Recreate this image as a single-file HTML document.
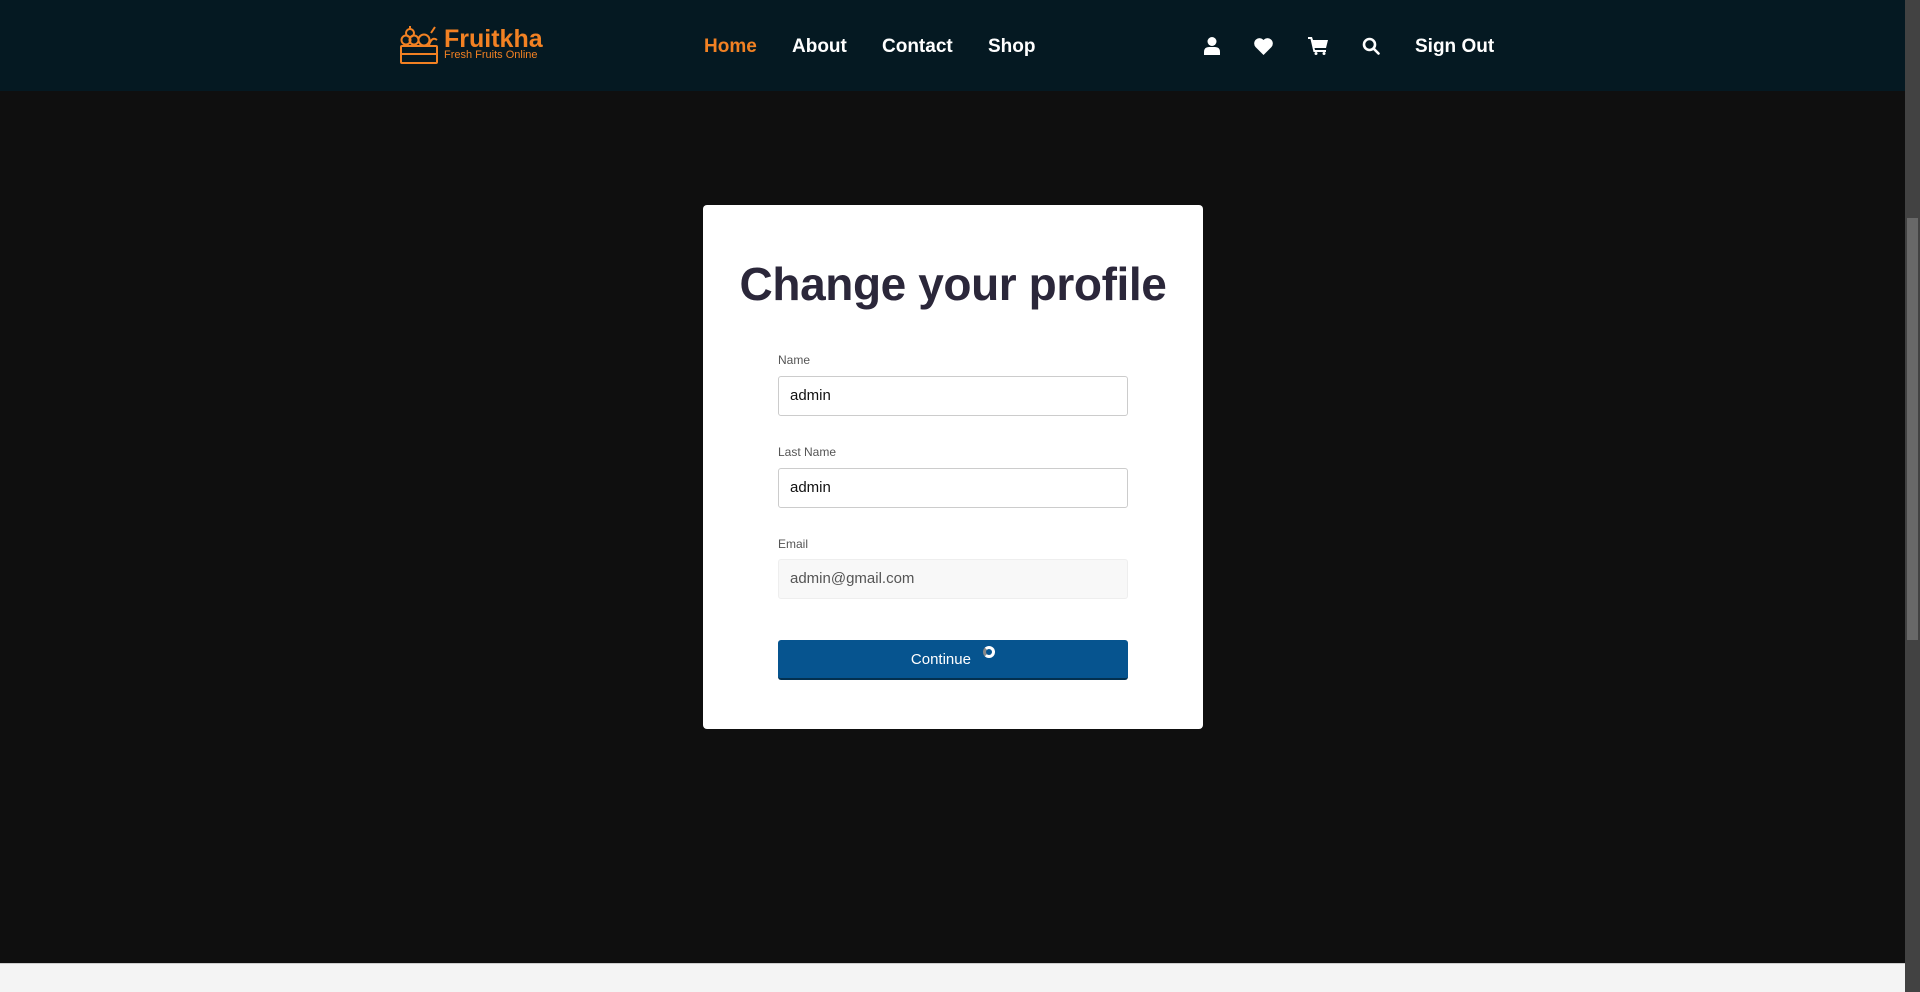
<!DOCTYPE html>
<html><head><meta charset="utf-8"><style>
*{margin:0;padding:0;box-sizing:border-box}
body{width:1920px;height:992px;overflow:hidden;background:#0f0f0f;font-family:"Liberation Sans",sans-serif;position:relative}
.hdr{position:absolute;left:0;top:0;width:1905px;height:91px;background:#051922}
.nav a{position:absolute;top:36px;font-weight:bold;font-size:19px;color:#fff;text-decoration:none;line-height:22px}
.bot{position:absolute;left:0;top:963px;width:1905px;height:29px;background:#f4f4f4;border-top:1px solid #ccc}
.sb{position:absolute;left:1905px;top:0;width:15px;height:992px;background:#424242}
.thumb{position:absolute;left:1907px;top:218px;width:11px;height:422px;background:#686868}
.card{position:absolute;left:703px;top:205px;width:500px;height:524px;background:#fff;border-radius:4px}
h1{position:absolute;left:0;width:500px;top:52px;text-align:center;font-size:46px;font-weight:bold;color:#2b273a;letter-spacing:-0.4px}
.lbl{position:absolute;left:75px;font-size:12px;color:#555}
.inp{position:absolute;left:75px;width:350px;height:40px;border:1px solid #ccc;border-radius:3px;font-size:15px;color:#111;padding:11px 11px;line-height:16px}
.btn{position:absolute;left:75px;top:435px;width:350px;height:40px;background:#06548f;border-radius:3px;border-bottom:2px solid #03304f;color:#fff;font-size:15px;text-align:center;line-height:40px}
</style></head><body>
<div class="hdr">
<svg style="position:absolute;left:400px;top:25px" width="39" height="39" viewBox="0 0 39 39" fill="none" stroke="#F28123" stroke-width="2">
<rect x="1" y="21" width="36" height="17" rx="1"/><line x1="1" y1="29" x2="37" y2="29"/>
<circle cx="10" cy="8" r="4"/><circle cx="6" cy="15" r="4.5"/><circle cx="14" cy="15" r="4.5"/><circle cx="24" cy="15" r="5.5"/><path d="M29 20 q3-9 8-5 M31 8 l4-6"/><path d="M10 4 v-3"/>
</svg>
<div style="position:absolute;left:444px;top:24px;font-size:25px;font-weight:bold;color:#F28123;line-height:30px">Fruitkha</div>
<div style="position:absolute;left:444px;top:49px;font-size:11px;color:#F28123;line-height:12px">Fresh Fruits Online</div>
<div class="nav">
<a style="left:704px;color:#F28123">Home</a>
<a style="left:792px">About</a>
<a style="left:882px">Contact</a>
<a style="left:988px">Shop</a>
<a style="left:1415px">Sign Out</a>
</div>
<svg style="position:absolute;left:1204px;top:37px" width="16" height="18" viewBox="0 0 16 18" fill="#fff"><circle cx="8" cy="4.5" r="4.5"/><path d="M0 18v-3q0-5 5-5h6q5 0 5 5v3z"/></svg>
<svg style="position:absolute;left:1254px;top:38px" width="19" height="17" viewBox="0 0 19 17" fill="#fff"><path d="M9.5 17L1.5 9A4.8 4.8 0 0 1 9.5 2A4.8 4.8 0 0 1 17.5 9Z"/></svg>
<svg style="position:absolute;left:1308px;top:37px" width="20" height="18" viewBox="0 0 20 18" fill="#fff"><path d="M0 0h4l1 3h15l-2 8H6.5l.5 2h11v2H5.5L2.5 2H0z"/><circle cx="8" cy="16.5" r="1.5"/><circle cx="16" cy="16.5" r="1.5"/></svg>
<svg style="position:absolute;left:1362px;top:37px" width="18" height="18" viewBox="0 0 18 18" fill="none" stroke="#fff" stroke-width="2.6"><circle cx="7.5" cy="7.5" r="5.5"/><line x1="11.5" y1="11.5" x2="16.5" y2="16.5" stroke-linecap="round"/></svg>
</div>
<div class="card">
<h1>Change your profile</h1>
<div class="lbl" style="top:148px">Name</div>
<div class="inp" style="top:171px">admin</div>
<div class="lbl" style="top:240px">Last Name</div>
<div class="inp" style="top:263px">admin</div>
<div class="lbl" style="top:332px">Email</div>
<div class="inp" style="top:354px;background:#f8f8f8;border-color:#eee;color:#555">admin@gmail.com</div>
<div class="btn">Continue <span style="display:inline-block;width:12px;height:12px;border:3px solid #fff;border-left-color:#888;border-radius:50%;vertical-align:6px;margin-left:8px"></span></div>
</div>
<div class="bot"></div>
<div class="sb"></div><div class="thumb"></div>
</body></html>
